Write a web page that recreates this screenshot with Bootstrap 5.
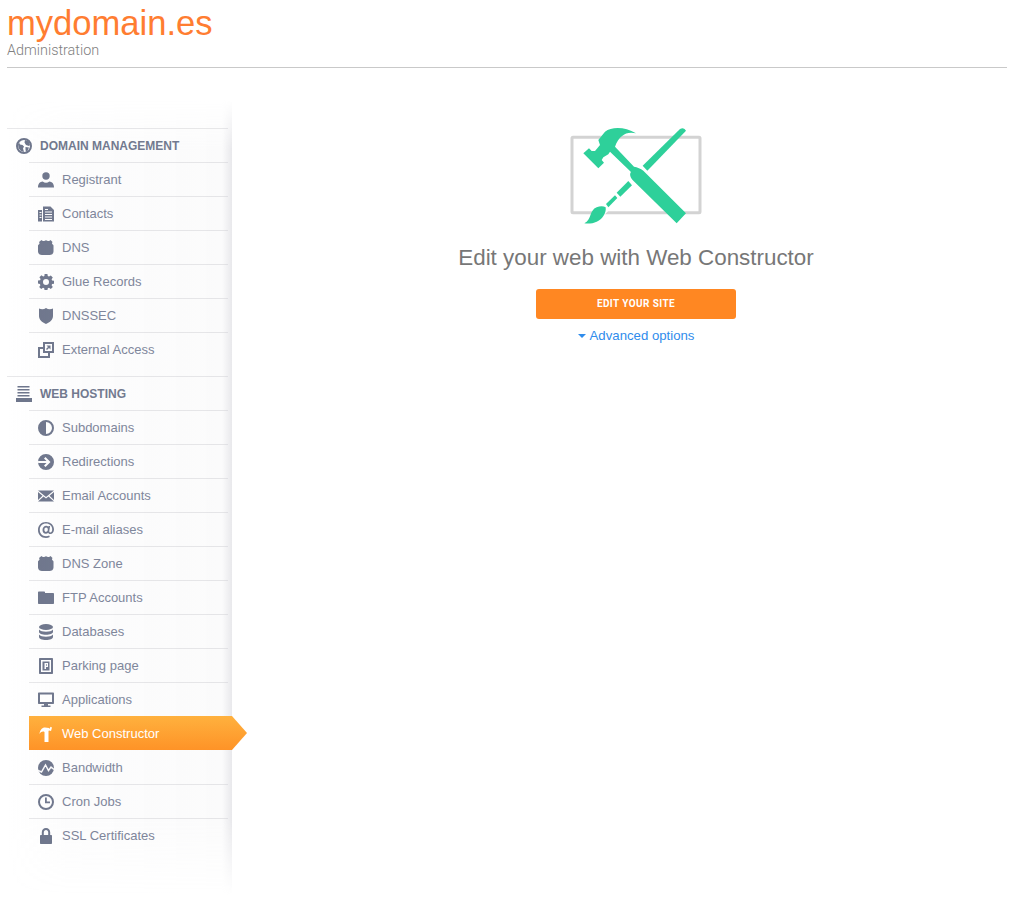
<!DOCTYPE html>
<html lang="en">
<head>
<meta charset="utf-8">
<title>mydomain.es</title>
<link rel="stylesheet" href="https://cdn.jsdelivr.net/npm/bootstrap@5.3.0/dist/css/bootstrap.min.css">
<style>
body{font-family:"Liberation Sans",Arial,sans-serif;background:#fff;color:#777;}
.page-head{margin:0 14px 0 7px;height:68px;border-bottom:1px solid #c9c9c9;padding-top:6px;}
.site-name{font-size:34.6px;line-height:35px;color:#ff7d31;margin:0;font-weight:400;}
.site-sub{font-family:Roboto,"Liberation Sans",sans-serif;font-weight:300;font-size:14.4px;line-height:18px;color:#808080;margin:1px 0 0;}
.layout{margin-top:32px;}
.side{width:225px;margin-left:7px;height:795px;padding-top:28px;position:relative;}
.side::after{content:"";position:absolute;top:0;left:0;right:0;bottom:0;background:linear-gradient(to right,rgba(205,205,212,0) 0,rgba(205,205,212,.06) 60px,rgba(205,205,212,.08) 215px,rgba(205,205,212,.45) 100%);-webkit-mask-image:linear-gradient(to bottom,transparent 0,#000 50px,#000 720px,transparent 795px);mask-image:linear-gradient(to bottom,transparent 0,#000 50px,#000 720px,transparent 795px);pointer-events:none;}
.side-group{margin-bottom:10px;}
.side-title{height:34px;border-top:1px solid #e8e8ea;margin:0 4px 0 0;padding-left:9px;gap:8px;font-size:12px;font-weight:700;color:#6d758b;}
.side-link{height:34px;border-top:1px solid #e8e8ea;margin:0 4px 0 22px;padding-left:9px;gap:8px;font-size:13px;color:#7a8298;text-decoration:none;position:relative;}
.side-link:hover{color:#7a8298;}
.side-link.on{z-index:1;width:218px;margin-right:0;border-top:0;padding-top:1px;color:#fff;background:linear-gradient(to bottom,#ffb13e,#fe9327);clip-path:polygon(0 0,203px 0,100% 50%,203px 100%,0 100%);}
.side-link.on:hover{color:#fff;}
.side-link.on + .side-link{border-top-color:transparent;}
.ico{width:16px;height:16px;flex:none;fill:#6d758b;}
.side-link.on .ico{fill:#fff;}
.main-pane{padding:20px 0 0 19px;}
.hero-art{width:150px;height:110px;display:block;margin-bottom:15px;}
.hero-title{font-size:22.4px;line-height:26px;color:#777;font-weight:400;margin:0 0 18px;}
.btn-edit{width:200px;height:30px;padding:0;line-height:29px;border:0;border-radius:3px;background:#ff8722;color:#fff;font-family:Roboto,"Liberation Sans",sans-serif;font-size:10px;font-weight:700;letter-spacing:.4px;}
.btn-edit:hover{background:#ff8722;color:#fff;}
.adv-link{font-size:13.2px;line-height:16px;color:#2f8cec;text-decoration:none;margin-top:9px;gap:4px;}
.adv-caret{width:0;height:0;border-left:4px solid transparent;border-right:4px solid transparent;border-top:4px solid #2f8cec;}
</style>
</head>
<body>
<header class="page-head">
  <h1 class="site-name">mydomain.es</h1>
  <p class="site-sub">Administration</p>
</header>
<div class="layout d-flex">
  <nav class="side flex-shrink-0">
    <div class="side-group">
      <div class="side-title d-flex align-items-center">
        <svg class="ico" viewBox="0 0 16 16"><circle cx="8" cy="8" r="7" fill="none" stroke="#6d758b" stroke-width="2"/><path d="M5.500 2 3 4.500l1 2 2.500.5 1.500 1.500-1 2 1 3.500L5 13 2.500 10 2 6z"/><path d="M9 2l4 1.500 1 3.500-1 1-3-1-1.500-2.500zM9.500 9l3.500.5-1.500 3.500-1.500 1-.5-2.500z"/></svg>
        DOMAIN MANAGEMENT
      </div>
      <a class="side-link d-flex align-items-center" href="#"><svg class="ico" viewBox="0 0 16 16"><circle cx="8" cy="4" r="3.700"/><path d="M0 15.500c0-4 2-5.700 4.700-6 1 .8 2.100 1.200 3.300 1.200s2.300-.4 3.300-1.200c2.700.3 4.700 2 4.700 6z"/></svg>Registrant</a>
      <a class="side-link d-flex align-items-center" href="#"><svg class="ico" viewBox="0 0 16 16"><path fill-rule="evenodd" d="M5 .500h7.500L16 4v11.500H5zm2 5v1h7v-1zm0 2.500v1h7V8zm0 2.500v1h7v-1zm0 2.500v1h7v-1zM7 3v1h3V3zM0 4h4v11.500H0zm1.500 2v1h2V6zm0 2.500v1h2v-1zm0 2.500v1h2v-1z"/></svg>Contacts</a>
      <a class="side-link d-flex align-items-center" href="#"><svg class="ico" viewBox="0 0 16 16"><path d="M3.500 0C4.200.8 4.800 1 5.500 1c1 0 1.500-.8 2.500-.8s1.500.8 2.500.8c.7 0 1.300-.2 2-1l2 2c-.3.500-.5 1-.5 1.500 0 .7 1.500 1.200 1.500 2v6c0 2.500-2 3.500-4 3.500H4c-2 0-4-1-4-3.500v-6c0-.8 1.500-1.300 1.500-2C1.500 3 1.300 2.500 1 2z"/></svg>DNS</a>
      <a class="side-link d-flex align-items-center" href="#"><svg class="ico" viewBox="0 0 16 16"><path fill-rule="evenodd" d="M6.600 0h2.800l.4 2.100 1.200.5 1.800-1.200 2 2-1.200 1.800.5 1.200 2.100.4v2.800l-2.100.4-.5 1.200 1.200 1.800-2 2-1.800-1.200-1.200.5-.4 2.100H6.600l-.4-2.100-1.200-.5-1.800 1.200-2-2 1.200-1.800-.5-1.200L0 9.400V6.600l2.100-.4.5-1.200-1.200-1.800 2-2 1.800 1.200 1.200-.5zM8 5a3 3 0 1 0 0 6 3 3 0 0 0 0-6z"/></svg>Glue Records</a>
      <a class="side-link d-flex align-items-center" href="#"><svg class="ico" viewBox="0 0 16 16"><path d="M1 .500c2.500 1.200 5 1 7-.5 2 1.500 4.500 1.700 7 .5v7.500c0 3.500-3 6.500-7 8-4-1.500-7-4.500-7-8z"/></svg>DNSSEC</a>
      <a class="side-link d-flex align-items-center" href="#"><svg class="ico" viewBox="0 0 16 16"><path fill-rule="evenodd" d="M5 0h11v11h-4v5H0V5h5zm2 2v7h7V2zM2 7v7h8v-3H5V7zm6.500-3.500h4v4L11 6 9 8 8 7l2-2z"/></svg>External Access</a>
    </div>
    <div class="side-group">
      <div class="side-title d-flex align-items-center">
        <svg class="ico" viewBox="0 0 16 16"><path d="M1.500 0h12v1.500h-12zM1.500 3h12v1.500h-12zM1.500 6h12v1.500h-12zM1.500 9h12v1.500h-12zM0 12h16v4H0z"/></svg>
        WEB HOSTING
      </div>
      <a class="side-link d-flex align-items-center" href="#"><svg class="ico" viewBox="0 0 16 16"><path fill-rule="evenodd" d="M8 0a8 8 0 1 1 0 16A8 8 0 0 1 8 0zm0 2v12a6 6 0 0 0 0-12z"/></svg>Subdomains</a>
      <a class="side-link d-flex align-items-center" href="#"><svg class="ico" viewBox="0 0 16 16"><path fill-rule="evenodd" d="M8 0a8 8 0 1 1 0 16A8 8 0 0 1 8 0zM7.500 3L6 4.500 8.500 7H0v2h8.500L6 11.500 7.500 13l5-5z"/></svg>Redirections</a>
      <a class="side-link d-flex align-items-center" href="#"><svg class="ico" viewBox="0 0 16 16"><path d="M0 2.500h16L8 9zM0 4l4.500 3.700L0 12zM16 4v8l-4.500-4.300zM5.500 8.500 8 10.500l2.500-2L16 13.500H0z"/></svg>Email Accounts</a>
      <a class="side-link d-flex align-items-center" href="#"><svg class="ico" viewBox="0 0 16 16"><path fill-rule="evenodd" d="M8 0c4.500 0 8 3 8 7.500 0 2.700-1.700 4.500-3.600 4.500-1.100 0-1.900-.5-2.200-1.300-.6.700-1.400 1.100-2.400 1.100-2 0-3.300-1.600-3.300-3.700C4.500 5.500 6.200 3.800 8.200 3.800c1 0 1.700.4 2.100 1l.2-.8h1.600l-.8 5c-.1.800.2 1.400.9 1.400 1 0 2-1.200 2-3 0-3.300-2.600-5.800-6.200-5.800S1.800 4.300 1.800 8s2.600 6.200 6.200 6.200c1.200 0 2.200-.2 3.200-.7l.6 1.500c-1.200.6-2.400 1-3.800 1-4.700 0-8-3.300-8-8S3.300 0 8 0zm.2 5.500c-1 0-1.800.9-1.800 2.300 0 1.300.7 2.100 1.600 2.100 1 0 1.800-1 1.800-2.300 0-1.300-.6-2.100-1.600-2.100z"/></svg>E-mail aliases</a>
      <a class="side-link d-flex align-items-center" href="#"><svg class="ico" viewBox="0 0 16 16"><path d="M3.500 0C4.200.8 4.800 1 5.500 1c1 0 1.500-.8 2.500-.8s1.500.8 2.500.8c.7 0 1.300-.2 2-1l2 2c-.3.500-.5 1-.5 1.500 0 .7 1.500 1.200 1.500 2v6c0 2.500-2 3.500-4 3.500H4c-2 0-4-1-4-3.500v-6c0-.8 1.500-1.300 1.500-2C1.500 3 1.300 2.500 1 2z"/></svg>DNS Zone</a>
      <a class="side-link d-flex align-items-center" href="#"><svg class="ico" viewBox="0 0 16 16"><path d="M.8 1.500h5.400c.5 0 .8.300.8.8v.7h8.200c.5 0 .8.300.8.800v9.400c0 .5-.3.800-.8.800H.8c-.5 0-.8-.3-.8-.8V2.300c0-.5.300-.8.800-.8z"/></svg>FTP Accounts</a>
      <a class="side-link d-flex align-items-center" href="#"><svg class="ico" viewBox="0 0 16 16"><ellipse cx="8" cy="3" rx="7" ry="3"/><path d="M1 5.500C2 7 5 7.700 8 7.700s6-.7 7-2.200V8c0 1.500-3 2.700-7 2.700S1 9.500 1 8z"/><path d="M1 10.500c1 1.500 4 2.200 7 2.200s6-.7 7-2.200V13c0 1.700-3 3-7 3s-7-1.300-7-3z"/></svg>Databases</a>
      <a class="side-link d-flex align-items-center" href="#"><svg class="ico" viewBox="0 0 16 16"><path fill-rule="evenodd" d="M2 0h12c.6 0 1 .4 1 1v14c0 .6-.4 1-1 1H2c-.6 0-1-.4-1-1V1c0-.6.4-1 1-1zm1 2v12h10V2z"/><path fill-rule="evenodd" d="M4.500 3.500h7v9h-7zM6.500 5v6H8V9h2V5zM8 6.300h.8v1.400H8z"/></svg>Parking page</a>
      <a class="side-link d-flex align-items-center" href="#"><svg class="ico" viewBox="0 0 16 16"><path fill-rule="evenodd" d="M1 .500h14c.6 0 1 .4 1 1V11c0 .6-.4 1-1 1H1c-.6 0-1-.4-1-1V1.500c0-.6.4-1 1-1zm1 2V10h12V2.500z"/><path d="M6 12h4v1.500h2.500V15h-9v-1.500H6z"/></svg>Applications</a>
      <a class="side-link on d-flex align-items-center" href="#"><svg class="ico" viewBox="0 0 16 16"><path d="M1.500 8C2 4 4 1.500 7 1.500L11 2l.5 1 1-2.200 1.500.7-1 3.500-2-.5-.5.500V16H6.500V6C5 5 3 5.500 1.500 8z"/></svg>Web Constructor</a>
      <a class="side-link d-flex align-items-center" href="#"><svg class="ico" viewBox="0 0 16 16"><circle cx="8" cy="8" r="8"/><path d="M0 10.500l3.500 1.500 4-7 3 5.500 2.500-3.500 3 2.500" fill="none" stroke="#fbfbfc" stroke-width="1.500"/></svg>Bandwidth</a>
      <a class="side-link d-flex align-items-center" href="#"><svg class="ico" viewBox="0 0 16 16"><path fill-rule="evenodd" d="M8 0a8 8 0 1 1 0 16A8 8 0 0 1 8 0zm0 2a6 6 0 1 0 0 12A6 6 0 0 0 8 2zM7 3.500h1.800V7.500H12v1.700H7z"/></svg>Cron Jobs</a>
      <a class="side-link d-flex align-items-center" href="#"><svg class="ico" viewBox="0 0 16 16"><path fill-rule="evenodd" d="M8 0c2.500 0 4.200 1.700 4.200 4.200V7h.8c.6 0 1 .4 1 1v7c0 .6-.4 1-1 1H3c-.6 0-1-.4-1-1V8c0-.6.4-1 1-1h.8V4.200C3.800 1.700 5.500 0 8 0zm0 2C6.700 2 5.800 3 5.800 4.300V7h4.400V4.300C10.200 3 9.300 2 8 2z"/></svg>SSL Certificates</a>
    </div>
  </nav>
  <main class="main-pane flex-grow-1 d-flex flex-column align-items-center">
    <svg class="hero-art" viewBox="3 0 450 330">
      <rect x="36" y="52" width="384" height="226" rx="3" fill="#fff" stroke="#d3d3d3" stroke-width="9"/>
      <path fill="#fff" d="M62 322 140 240 150 268 95 322z"/>
      <g fill="#2ed09a">
        <path d="M228 40C200 33 178 45 165 80L222 140C232 142 242 145 250 152L378 280 350 310 220 182C210 172 208 162 213 156L150 95 145 103 130 112 125 120 132 128 115 145 70 100 87 85 95 93 105 93 120 75 115 60 135 35C155 20 195 20 228 40Z"/>
        <path d="M248 137 360 27Q372 20 378 32L262 152Z"/>
        <path d="M170 218 205 183 216 196 181 230Z"/>
        <path d="M138 252 165 226 172 234 145 262Z"/>
        <path d="M73 310C95 300 88 270 110 262 120 258 130 258 137 262 140 280 125 300 110 305 100 310 85 312 73 310Z"/>
      </g>
    </svg>
    <h2 class="hero-title">Edit your web with Web Constructor</h2>
    <a class="btn btn-edit" href="#">EDIT YOUR SITE</a>
    <a class="adv-link d-flex align-items-center" href="#"><span class="adv-caret"></span>Advanced options</a>
  </main>
</div>
<script src="https://cdn.jsdelivr.net/npm/bootstrap@5.3.0/dist/js/bootstrap.bundle.min.js"></script>
</body>
</html>
